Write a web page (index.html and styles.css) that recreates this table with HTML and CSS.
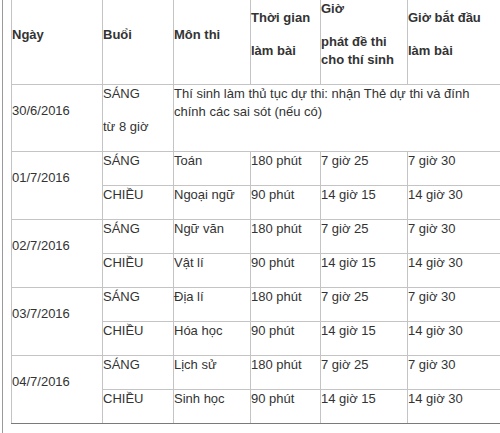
FILE: index.html
```html
<!DOCTYPE html>
<html lang="vi">
<head>
<meta charset="utf-8">
<title>Lịch thi</title>
<link rel="stylesheet" href="styles.css">
</head>
<body>
<div class="page">
  <table class="schedule">
    <colgroup>
      <col class="c-date">
      <col class="c-session">
      <col class="c-subject">
      <col class="c-duration">
      <col class="c-hand">
      <col class="c-start">
    </colgroup>
    <thead>
      <tr>
        <th><p>Ngày</p></th>
        <th><p>Buổi</p></th>
        <th><p>Môn thi</p></th>
        <th><p>Thời gian</p><p>làm bài</p></th>
        <th><p>Giờ</p><p>phát đề thi cho thí sinh</p></th>
        <th><p>Giờ bắt đầu</p><p>làm bài</p></th>
      </tr>
    </thead>
    <tbody>
      <tr>
        <td class="date"><p>30/6/2016</p></td>
        <td class="top"><p>SÁNG</p><p>từ 8 giờ</p></td>
        <td class="top" colspan="4"><p>Thí sinh làm thủ tục dự thi: nhận Thẻ dự thi và đính chính các sai sót (nếu có)</p></td>
      </tr>
      <tr>
        <td class="date" rowspan="2"><p>01/7/2016</p></td>
        <td><p>SÁNG</p></td><td><p>Toán</p></td><td><p>180 phút</p></td><td><p>7 giờ 25</p></td><td><p>7 giờ 30</p></td>
      </tr>
      <tr>
        <td><p>CHIỀU</p></td><td><p>Ngoại ngữ</p></td><td><p>90 phút</p></td><td><p>14 giờ 15</p></td><td><p>14 giờ 30</p></td>
      </tr>
      <tr>
        <td class="date" rowspan="2"><p>02/7/2016</p></td>
        <td><p>SÁNG</p></td><td><p>Ngữ văn</p></td><td><p>180 phút</p></td><td><p>7 giờ 25</p></td><td><p>7 giờ 30</p></td>
      </tr>
      <tr>
        <td><p>CHIỀU</p></td><td><p>Vật lí</p></td><td><p>90 phút</p></td><td><p>14 giờ 15</p></td><td><p>14 giờ 30</p></td>
      </tr>
      <tr>
        <td class="date" rowspan="2"><p>03/7/2016</p></td>
        <td><p>SÁNG</p></td><td><p>Địa lí</p></td><td><p>180 phút</p></td><td><p>7 giờ 25</p></td><td><p>7 giờ 30</p></td>
      </tr>
      <tr>
        <td><p>CHIỀU</p></td><td><p>Hóa học</p></td><td><p>90 phút</p></td><td><p>14 giờ 15</p></td><td><p>14 giờ 30</p></td>
      </tr>
      <tr>
        <td class="date" rowspan="2"><p>04/7/2016</p></td>
        <td><p>SÁNG</p></td><td><p>Lịch sử</p></td><td><p>180 phút</p></td><td><p>7 giờ 25</p></td><td><p>7 giờ 30</p></td>
      </tr>
      <tr class="last">
        <td><p>CHIỀU</p></td><td><p>Sinh học</p></td><td><p>90 phút</p></td><td><p>14 giờ 15</p></td><td><p>14 giờ 30</p></td>
      </tr>
    </tbody>
  </table>
</div>
</body>
</html>
```
FILE: styles.css
```css
html, body {
  margin: 0;
  padding: 0;
  background: #fff;
  overflow: hidden;
}

body {
  font-family: "Liberation Sans", Arial, sans-serif;
  font-size: 13px;
  line-height: 18px;
  color: #333;
}

.page {
  margin-left: 2px;
  border-left: 1px solid #9a9a9a;
  padding-left: 8px;
  height: 433px;
  overflow: hidden;
}

.schedule {
  border-collapse: collapse;
  table-layout: fixed;
  width: 491px;
}

.c-date { width: 91px; }
.c-session { width: 71px; }
.c-subject { width: 77px; }
.c-duration { width: 70px; }
.c-hand { width: 87px; }
.c-start { width: 95px; }

.schedule th,
.schedule td {
  border: 1px solid #c4c4c4;
  padding: 0;
  text-align: left;
  vertical-align: middle;
}

.schedule thead th {
  border-top: 0;
  font-weight: bold;
}

.schedule td.top {
  vertical-align: top;
}

.schedule tr.last td,
.schedule td.date:last-child,
.schedule tbody tr:nth-last-child(2) td.date {
  border-bottom-color: #7a7a7a;
}

.schedule p {
  margin: 0 0 15px;
}
```
